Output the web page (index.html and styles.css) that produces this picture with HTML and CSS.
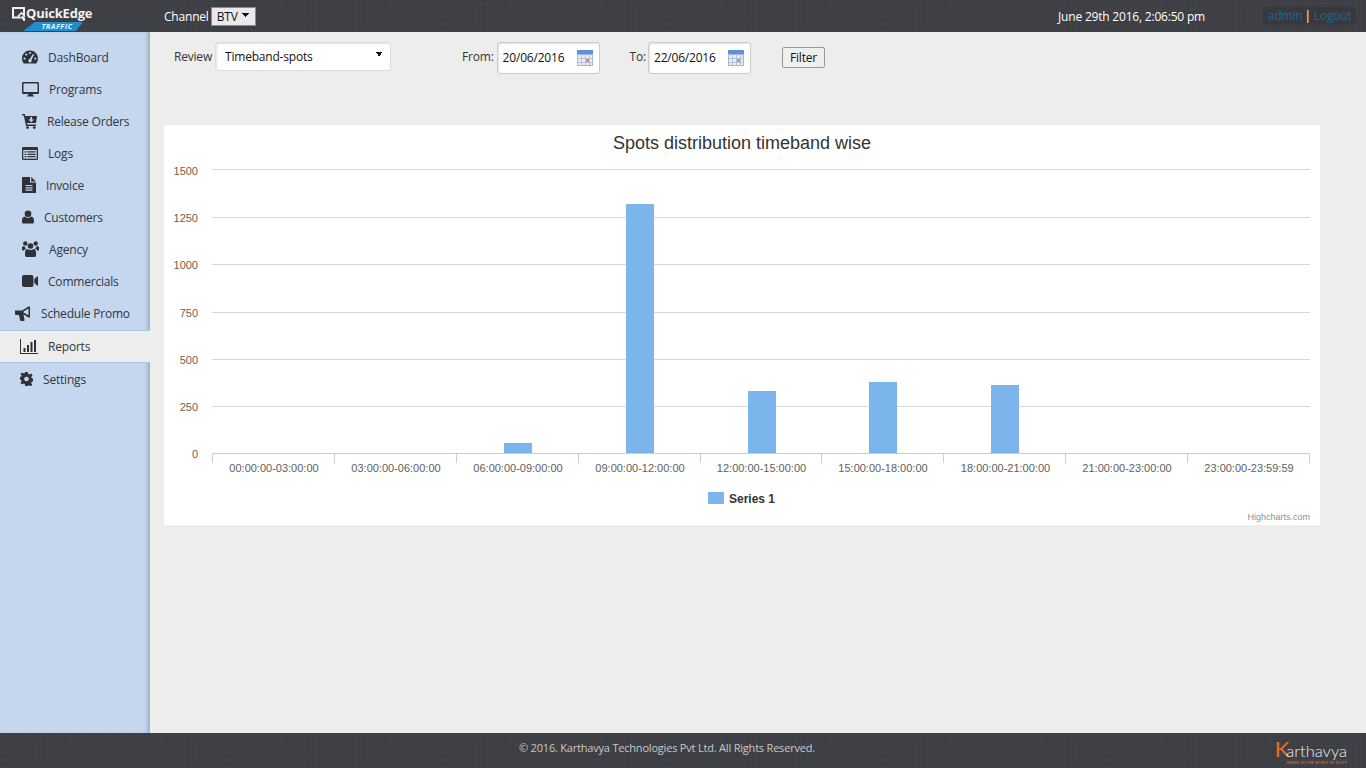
FILE: index.html
```html
<!DOCTYPE html>
<html lang="en">
<head>
    <meta charset="UTF-8">
    <meta name="viewport" content="width=device-width, initial-scale=1.0">
    <title>QuickEdge Traffic - Reports</title>
    <link rel="stylesheet" href="styles.css">
</head>
<body>

<div class="topbar">
    <div class="brand">
        <div class="brand-name">
            <svg width="13" height="14" viewBox="0 0 13 14"><path fill="#f2f2f2" fill-rule="evenodd" d="M0 0h13v10.500L9.500 7 7.500 9l2.500 2.500H0zM2 2v7.500h4.800L5.300 9l4.200-4.200 1.500 1.500V2z"/><path fill="#f2f2f2" d="M9 10l1.500-1.500 2.500 2.500v3h-1.500z"/></svg>
            <span>QuickEdge</span>
        </div>
        <div class="brand-tag">TRAFFIC</div>
    </div>
    <label class="channel">Channel
        <select class="channel-select"><option>BTV</option></select>
    </label>
    <div class="clock">June 29th 2016, 2:06:50 pm</div>
    <div class="user-links"><a href="#">admin</a><span class="sep">|</span> <a href="#">Logout</a></div>
</div>

<div class="middle">
    <ul class="sidebar">
        <li>
            <svg width="16" height="14" viewBox="0 0 16 14"><path fill="#2f3136" d="M8 .5C3.600.500 0 4 0 8.400c0 1.900.6 3.500 1.600 4.800.2.300.5.400.8.400h11.200c.3 0 .6-.1.800-.4 1-1.300 1.600-2.900 1.600-4.800C16 4 12.400.500 8 .500z"/><g fill="#c5d7ee"><circle cx="2.600" cy="8.600" r="1.100"/><circle cx="4.300" cy="4.600" r="1.100"/><circle cx="8" cy="3" r="1.100"/><circle cx="13.400" cy="8.600" r="1.100"/><path d="M11.200 3.800l1 .6-2.700 5.400a1.700 1.700 0 1 1-1.800-.8z"/></g></svg>
            <span>DashBoard</span>
        </li>
        <li>
            <svg width="17" height="15" viewBox="0 0 17 15"><path fill="#2f3136" d="M1.300 0h14.400c.7 0 1.300.6 1.300 1.300v9.400c0 .7-.6 1.300-1.300 1.300H10.500l.5 1.500h1v1H5v-1h1l.5-1.500H1.300C.6 12 0 11.400 0 10.700V1.300C0 .6.600 0 1.300 0zm.2 1.500v8.500h14V1.500z"/></svg>
            <span>Programs</span>
        </li>
        <li>
            <svg width="15" height="15" viewBox="0 0 15 15"><path fill="#2f3136" d="M0 0h2.800l.5 2H15l-1 7H5l.3 1.500H14V12H4L1.800 1.500H0z"/><circle fill="#2f3136" cx="5.500" cy="13.600" r="1.400"/><circle fill="#2f3136" cx="12.300" cy="13.600" r="1.400"/><path fill="#c5d7ee" d="M8.300 3h1.800v2.500H12L9.200 8.300 6.400 5.500h1.900z"/></svg>
            <span>Release Orders</span>
        </li>
        <li>
            <svg width="16" height="13" viewBox="0 0 16 13"><path fill="#2f3136" d="M1.200 0h13.600C15.500 0 16 .5 16 1.200v10.600c0 .7-.5 1.200-1.200 1.200H1.200C.5 13 0 12.500 0 11.800V1.200C0 .5.500 0 1.200 0z"/><path fill="#c5d7ee" d="M1.300 3h13.400v8.700H1.300z"/><path fill="#2f3136" d="M2.500 4.200h2v1.200h-2zM5.500 4.200h8v1.200h-8zM2.500 6.700h2v1.200h-2zM5.500 6.700h8v1.200h-8zM2.500 9.100h2v1.200h-2zM5.500 9.100h8v1.200h-8z"/></svg>
            <span>Logs</span>
        </li>
        <li>
            <svg width="14" height="16" viewBox="0 0 14 16"><path fill="#2f3136" d="M0 0h8v5.500h6V16H0z"/><path fill="#2f3136" d="M9.200 0L14 4.500H9.200z"/><path fill="#c5d7ee" d="M3.500 8h7v1.100h-7zM3.500 10.300h7v1.100h-7zM3.500 12.600h7v1.100h-7z"/></svg>
            <span>Invoice</span>
        </li>
        <li>
            <svg width="12" height="14" viewBox="0 0 13 14"><circle fill="#2f3136" cx="6.500" cy="3.600" r="3.600"/><path fill="#2f3136" d="M3 6.500C4 7.500 5.100 8 6.500 8s2.500-.5 3.500-1.500c1.900.2 3 1.800 3 4.500v1.300c0 .9-.7 1.700-1.700 1.700H1.700C.7 14 0 13.200 0 12.300V11c0-2.700 1.100-4.300 3-4.500z"/></svg>
            <span>Customers</span>
        </li>
        <li>
            <svg width="17" height="16" viewBox="0 0 17 16"><g fill="#2f3136"><circle cx="3.300" cy="2.500" r="2.200"/><circle cx="13.700" cy="2.500" r="2.200"/><circle cx="8.500" cy="5" r="2.800"/><path d="M0 5.800C.7 5.200 1.500 5 2.500 5.400c.3.800.8 1.500 1.400 2-1 .5-1.600 1.200-2 2.200H.8C.3 9.600 0 9.300 0 8.800zM17 5.800c-.7-.6-1.500-.8-2.500-.4-.3.800-.8 1.500-1.400 2 1 .5 1.600 1.200 2 2.200h1.100c.5 0 .8-.3.800-.8z"/><path d="M5.400 8c.9.700 1.900 1 3.100 1s2.200-.3 3.100-1c1.500.2 2.400 1.500 2.400 3.800v2.400c0 .9-.6 1.800-1.700 1.800H4.700C3.600 16 3 15.100 3 14.200v-2.400C3 9.500 3.900 8.200 5.400 8z"/></g></svg>
            <span>Agency</span>
        </li>
        <li>
            <svg width="16" height="12" viewBox="0 0 16 12"><path fill="#2f3136" d="M2 0h7.500c1.100 0 2 .9 2 2v8c0 1.100-.9 2-2 2H2c-1.100 0-2-.9-2-2V2C0 .9.900 0 2 0zM12.300 4.300L15 1.500c.4-.4 1-.1 1 .4v8.200c0 .5-.6.8-1 .4l-2.700-2.800z"/></svg>
            <span>Commercials</span>
        </li>
        <li class="promo">
            <svg width="16" height="15" viewBox="0 0 16 15"><path fill="#2f3136" d="M0 4.500h7l6.500-4H15v11h-1.500L8.500 8.600l1 5.400c0 .5-.2 1-.8 1H6c-.5 0-.8-.3-.9-.8L4 9H1c-.6 0-1-.4-1-1z"/><path fill="#c5d7ee" d="M8.500 5.500l5-3v6.800l-5-2.700z"/></svg>
            <span>Schedule Promo</span>
        </li>
        <li class="active">
            <svg width="18" height="15" viewBox="0 0 18 15"><path fill="#2f3136" d="M0 0h1v14h17v1H0zM3.500 9h2v4h-2zM7 6h2v7H7zM10.500 3h2v10h-2zM14 1h2v12h-2z"/></svg>
            <span>Reports</span>
        </li>
        <li class="settings">
            <svg width="13" height="14" viewBox="0 0 13 14"><path fill="#2f3136" fill-rule="evenodd" d="M5.200 0h2.600l.4 2c.4.100.8.300 1.100.5l1.800-1 1.500 1.900-1.400 1.500c.2.300.3.700.3 1.100l1.500.7v2.500l-1.500.7c-.1.400-.2.700-.4 1.100l1.300 1.500-1.600 1.800-1.700-1c-.3.200-.7.400-1.100.5L7.800 14H5.200l-.4-1.900c-.4-.1-.8-.3-1.100-.5l-1.700 1L.4 10.800l1.300-1.500c-.2-.4-.3-.7-.4-1.100L0 7.500V5l1.300-.5c.1-.4.200-.8.400-1.100L.4 1.900 2 .5l1.700 1c.3-.2.700-.4 1.100-.5zM6.500 4.700a2.300 2.300 0 1 0 0 4.600 2.300 2.300 0 0 0 0-4.600z"/></svg>
            <span>Settings</span>
        </li>
    </ul>

    <div class="content">
        <form class="filters">
            <label class="field review">Review
                <select class="review-select"><option>Timeband-spots</option></select>
            </label>
            <label class="field from">From:
                <span class="date-box">
                    <input class="date-input" type="text" value="20/06/2016">
                    <svg width="16" height="16" viewBox="0 0 16 16"><path fill="#5f8fe0" d="M0 0h16v4H0z"/><path fill="#e8edf6" stroke="#9fb2d2" d="M.5 4.500h15v11H.5z"/><path stroke="#b4c3dc" fill="none" d="M4.500 4v12M8.500 4v12M12.500 4v12M0 8.500h16M0 12.500h16"/><path fill="#ec8a68" d="M9 9h3v3H9z"/></svg>
                </span>
            </label>
            <label class="field to">To:
                <span class="date-box">
                    <input class="date-input" type="text" value="22/06/2016">
                    <svg width="16" height="16" viewBox="0 0 16 16"><path fill="#5f8fe0" d="M0 0h16v4H0z"/><path fill="#e8edf6" stroke="#9fb2d2" d="M.5 4.500h15v11H.5z"/><path stroke="#b4c3dc" fill="none" d="M4.500 4v12M8.500 4v12M12.500 4v12M0 8.500h16M0 12.500h16"/><path fill="#ec8a68" d="M9 9h3v3H9z"/></svg>
                </span>
            </label>
            <button class="filter-btn" type="button">Filter</button>
        </form>

        <div class="chart-card">
            <svg class="chart" width="1156" height="400" viewBox="0 0 1156 400">
                <text class="chart-title" x="578" y="24">Spots distribution timeband wise</text>
                <g class="grid">
                    <path d="M48 44.500H1146M48 92.500H1146M48 139.500H1146M48 187.500H1146M48 234.500H1146M48 281.500H1146"/>
                </g>
                <g class="bars">
                    <rect x="340" y="318" width="28" height="10"/>
                    <rect x="462" y="79" width="28" height="249"/>
                    <rect x="584" y="266" width="28" height="62"/>
                    <rect x="705" y="257" width="28" height="71"/>
                    <rect x="827" y="260" width="28" height="68"/>
                </g>
                <path class="axis" d="M48 328.500H1146M48.500 328V338M170.500 328V338M292.500 328V338M414.500 328V338M536.500 328V338M657.500 328V338M779.500 328V338M901.500 328V338M1023.500 328V338M1145.500 328V338"/>
                <g class="y-labels">
                    <text x="34" y="50">1500</text>
                    <text x="34" y="97">1250</text>
                    <text x="34" y="144">1000</text>
                    <text x="34" y="192">750</text>
                    <text x="34" y="239">500</text>
                    <text x="34" y="286">250</text>
                    <text x="34" y="333">0</text>
                </g>
                <g class="x-labels">
                    <text x="110" y="347">00:00:00-03:00:00</text>
                    <text x="232" y="347">03:00:00-06:00:00</text>
                    <text x="354" y="347">06:00:00-09:00:00</text>
                    <text x="476" y="347">09:00:00-12:00:00</text>
                    <text x="597.500" y="347">12:00:00-15:00:00</text>
                    <text x="719" y="347">15:00:00-18:00:00</text>
                    <text x="841.500" y="347">18:00:00-21:00:00</text>
                    <text x="963" y="347">21:00:00-23:00:00</text>
                    <text x="1085" y="347">23:00:00-23:59:59</text>
                </g>
                <rect class="legend-box" x="544" y="367" width="16" height="12"/>
                <text class="legend-text" x="565" y="378">Series 1</text>
                <text class="credits" x="1146" y="395">Highcharts.com</text>
            </svg>
        </div>
    </div>
</div>

<div class="footer">
    <div class="copy">© 2016. Karthavya Technologies Pvt Ltd. All Rights Reserved.</div>
    <div class="maker">
        <div class="maker-name"><b>K</b>arthavya</div>
        <div class="maker-tag">SERVE IN THE SPIRIT OF DUTY</div>
    </div>
</div>

</body>
</html>
```

FILE: styles.css
```css
* {
    box-sizing: border-box;
}

html, body {
    height: 100%;
}

body {
    margin: 0;
    display: flex;
    flex-direction: column;
    overflow: hidden;
    font-family: "Open Sans", sans-serif;
    font-size: 12px;
    letter-spacing: -0.2px;
    color: #333;
    background: #ededed;
}

.topbar, .footer {
    background-color: #3e3e45;
    background-image:
        repeating-linear-gradient(0deg, rgba(0, 0, 0, 0.04) 0, rgba(0, 0, 0, 0.04) 1px, transparent 1px, transparent 5px),
        repeating-linear-gradient(0deg, rgba(255, 255, 255, 0.012) 0, rgba(255, 255, 255, 0.012) 2px, transparent 2px, transparent 7px),
        repeating-linear-gradient(90deg, rgba(0, 0, 0, 0.035) 0, rgba(0, 0, 0, 0.035) 1px, transparent 1px, transparent 11px),
        repeating-linear-gradient(90deg, rgba(255, 255, 255, 0.012) 0, rgba(255, 255, 255, 0.012) 2px, transparent 2px, transparent 5px);
    color: #fff;
}

/* top bar */
.topbar {
    height: 32px;
    flex: none;
    display: flex;
    align-items: center;
    padding-left: 12px;
}

.brand {
    width: 152px;
    height: 32px;
    flex: none;
    padding-top: 6px;
}

.brand-name {
    display: flex;
    align-items: center;
    gap: 1px;
    height: 15px;
    font-size: 13px;
    font-weight: 700;
    line-height: 15px;
    color: #f2f2f2;
}

.brand-tag {
    width: 60px;
    height: 9px;
    margin: 1px 0 0 11px;
    padding-left: 8px;
    background: #1f8ed0;
    clip-path: polygon(20% 0, 100% 0, 88% 100%, 0 100%);
    color: #dff2ff;
    font-size: 7.500px;
    font-weight: 700;
    font-style: italic;
    line-height: 9px;
    letter-spacing: 0.4px;
    text-align: center;
}

.channel {
    display: flex;
    align-items: center;
    gap: 2px;
}

select {
    appearance: none;
    background-repeat: no-repeat;
    font-family: "Open Sans", sans-serif;
    font-size: 12px;
    letter-spacing: -0.2px;
    color: #111;
}

.channel-select {
    width: 45px;
    height: 19px;
    padding: 0 0 0 5px;
    border: 1px solid #8c8c8c;
    border-radius: 0;
    background-color: #e9e9e9;
    background-image: linear-gradient(to top right, transparent 50%, #111 50%), linear-gradient(to top left, transparent 50%, #111 50%);
    background-size: 4px 5px, 4px 5px;
    background-position: 30px 5px, 33px 5px;
}

.clock {
    margin-left: auto;
}

.user-links {
    width: 93px;
    height: 18px;
    margin: 0 10px 0 58px;
    padding-left: 5px;
    border-radius: 3px;
    background: #38383d;
    line-height: 18px;
    white-space: nowrap;
}

.user-links a {
    color: #0f6b9f;
    text-decoration: none;
}

.sep {
    margin-left: 2px;
    color: #fff;
}

/* side menu */
.middle {
    flex: 1;
    display: flex;
    min-height: 0;
}

.sidebar {
    width: 150px;
    flex: none;
    margin: 0;
    padding: 9px 0 0;
    list-style: none;
    background: #c5d7ee;
    box-shadow: inset -4px 0 4px -2px rgba(60, 80, 110, 0.35);
    color: #33363c;
}

.sidebar li {
    display: flex;
    align-items: center;
    gap: 10px;
    height: 32px;
    padding-left: 22px;
}

.sidebar li.promo {
    padding-left: 15px;
}

.sidebar li.active {
    height: 33px;
    margin-top: 1px;
    padding-left: 20px;
    background: #ededed;
    border-top: 1px solid #a9c3e6;
    border-bottom: 1px solid #a9c3e6;
}

.sidebar li.settings {
    padding-left: 20px;
}

/* filters */
.content {
    flex: 1;
    padding: 10px 0 0 14px;
}

.filters {
    display: flex;
    align-items: flex-start;
    height: 32px;
    padding-left: 10px;
}

.field {
    display: flex;
    align-items: flex-start;
    gap: 3px;
    line-height: 30px;
}

.field.review {
    line-height: 29px;
}

.field.from {
    margin-left: 71px;
}

.field.to {
    margin-left: 30px;
    gap: 2px;
}

.review-select {
    width: 176px;
    height: 29px;
    padding: 0 0 0 9px;
    border: 1px solid #ddd;
    border-radius: 3px;
    background-color: #fff;
    background-image: linear-gradient(to top right, transparent 50%, #111 50%), linear-gradient(to top left, transparent 50%, #111 50%);
    background-size: 3px 5px, 3px 5px;
    background-position: 160px 9px, 163px 9px;
    box-shadow: inset 1px 1px 2px rgba(0, 0, 0, 0.12);
}

.date-box {
    display: flex;
    align-items: center;
    width: 103px;
    height: 32px;
    padding-right: 6px;
    border: 1px solid #ccc;
    border-radius: 3px;
    background: #fff;
    box-shadow: inset 1px 1px 2px rgba(0, 0, 0, 0.12);
}

.date-input {
    flex: 1;
    width: 0;
    padding: 0 0 2px 5px;
    border: none;
    outline: none;
    background: transparent;
    color: #111;
    font-family: "Open Sans", sans-serif;
    font-size: 12px;
    letter-spacing: -0.2px;
}

.filter-btn {
    width: 43px;
    height: 21px;
    margin: 5px 0 0 31px;
    padding: 0 0 1px;
    border: 1px solid #999;
    border-radius: 2px;
    background: #efefef;
    color: #111;
    font-family: "Open Sans", sans-serif;
    font-size: 12px;
    letter-spacing: -0.2px;
}

/* chart */
.chart-card {
    width: 1156px;
    height: 400px;
    margin-top: 51px;
    background: #fff;
}

.chart {
    display: block;
    font-family: "Liberation Sans", Arial, sans-serif;
    letter-spacing: normal;
}

.chart-title {
    font-size: 18px;
    fill: #333;
    text-anchor: middle;
}

.grid path {
    stroke: #d8d8d8;
    fill: none;
}

.bars rect, .legend-box {
    fill: #7cb5ec;
}

.axis {
    stroke: #c0d0e0;
    fill: none;
}

.y-labels text {
    font-size: 11px;
    fill: #7a5c48;
    text-anchor: end;
}

.x-labels text {
    font-size: 11px;
    fill: #606060;
    text-anchor: middle;
}

.legend-text {
    font-size: 12px;
    font-weight: 700;
    fill: #333;
}

.credits {
    font-size: 9px;
    fill: #909090;
    text-anchor: end;
}

/* footer */
.footer {
    height: 35px;
    flex: none;
    display: flex;
    align-items: flex-start;
    padding: 0 19px 0 519px;
}

.copy {
    margin-top: 7px;
    color: #c9c9c9;
    font-size: 11px;
    line-height: 16px;
}

.maker {
    margin-left: auto;
    margin-top: 5px;
    text-align: right;
}

.maker-name {
    height: 22px;
    font-family: Lato, sans-serif;
    font-size: 16.500px;
    font-weight: 300;
    line-height: 22px;
    letter-spacing: 0;
    color: #f0f0f0;
}

.maker-name b {
    color: #e8701f;
    font-size: 22px;
    font-weight: 400;
    letter-spacing: -3px;
}

.maker-tag {
    color: #c9641f;
    font-size: 4px;
    font-weight: 700;
    line-height: 5px;
    letter-spacing: 0.1px;
}
```
